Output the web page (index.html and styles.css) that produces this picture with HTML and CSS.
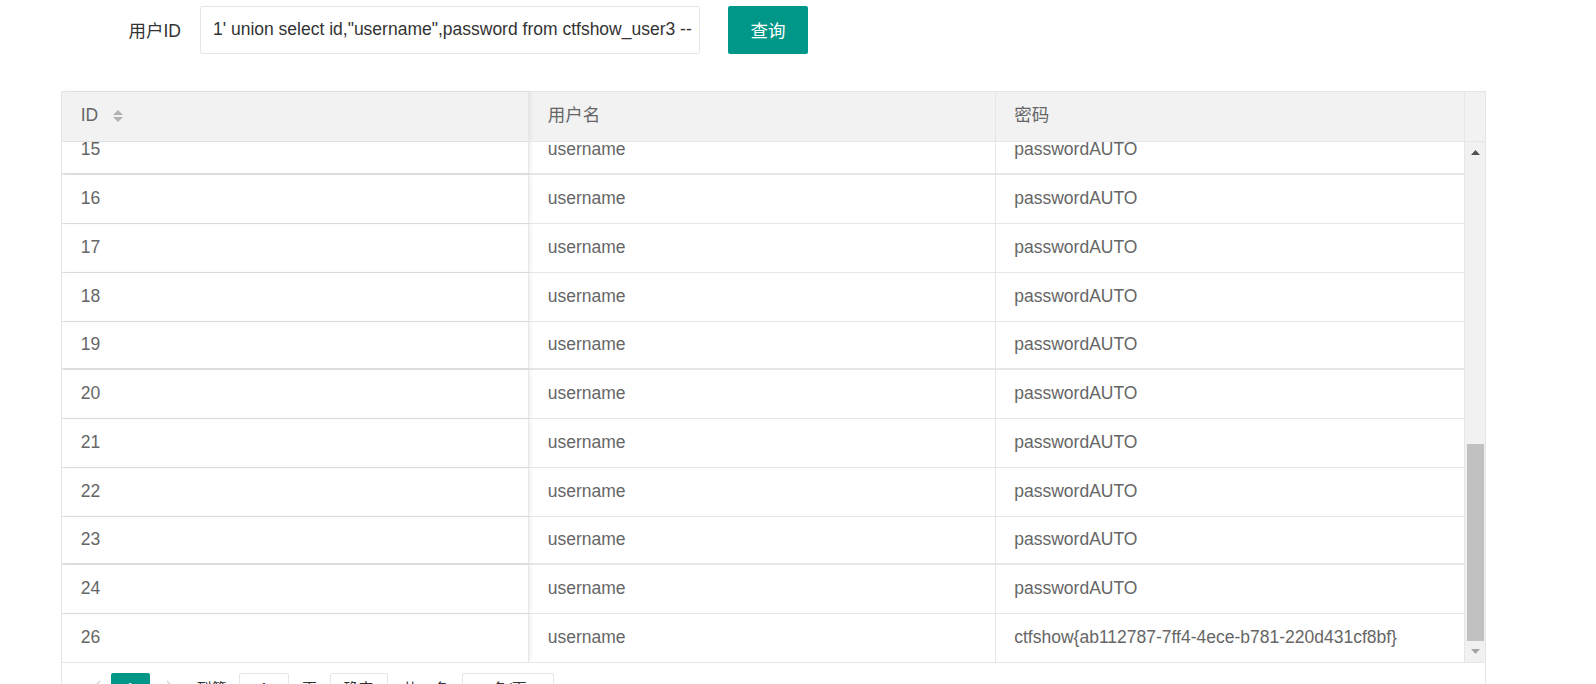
FILE: index.html
```html
<!DOCTYPE html>
<html lang="zh-CN">
<head>
  <meta charset="UTF-8" />
  <title>ctfshow 查询</title>
  <link rel="stylesheet" href="styles.css">
</head>
<body>
  <div class="page">
    <form class="query-form" onsubmit="return false;">
      <label class="form-label" for="uid">用户ID</label>
      <input class="form-input" id="uid" type="text" value='1&#39; union select id,"username",password from ctfshow_user3 -- c' />
      <button class="query-button" type="submit">查询</button>
    </form>

    <div class="table-box">
      <div class="table-head">
        <div class="cell col-id">ID
          <svg class="sort-icon" width="10" height="14" viewBox="0 0 10 14">
            <polygon points="0,6 5,1 10,6" />
            <polygon points="0,8 5,13 10,8" />
          </svg>
        </div>
        <div class="cell col-name">用户名</div>
        <div class="cell col-pass">密码</div>
        <div class="gutter"></div>
      </div>

      <div class="table-body">
        <div class="rows">
          <div class="rows-inner">
            <div class="row thick"><div class="cell col-id">15</div><div class="cell col-name">username</div><div class="cell col-pass">passwordAUTO</div></div>
            <div class="row"><div class="cell col-id">16</div><div class="cell col-name">username</div><div class="cell col-pass">passwordAUTO</div></div>
            <div class="row"><div class="cell col-id">17</div><div class="cell col-name">username</div><div class="cell col-pass">passwordAUTO</div></div>
            <div class="row"><div class="cell col-id">18</div><div class="cell col-name">username</div><div class="cell col-pass">passwordAUTO</div></div>
            <div class="row thick"><div class="cell col-id">19</div><div class="cell col-name">username</div><div class="cell col-pass">passwordAUTO</div></div>
            <div class="row"><div class="cell col-id">20</div><div class="cell col-name">username</div><div class="cell col-pass">passwordAUTO</div></div>
            <div class="row"><div class="cell col-id">21</div><div class="cell col-name">username</div><div class="cell col-pass">passwordAUTO</div></div>
            <div class="row"><div class="cell col-id">22</div><div class="cell col-name">username</div><div class="cell col-pass">passwordAUTO</div></div>
            <div class="row thick"><div class="cell col-id">23</div><div class="cell col-name">username</div><div class="cell col-pass">passwordAUTO</div></div>
            <div class="row"><div class="cell col-id">24</div><div class="cell col-name">username</div><div class="cell col-pass">passwordAUTO</div></div>
            <div class="row"><div class="cell col-id">26</div><div class="cell col-name">username</div><div class="cell col-pass">ctfshow{ab112787-7ff4-4ece-b781-220d431cf8bf}</div></div>
          </div>
        </div>
        <div class="scrollbar">
          <div class="scroll-btn">
            <svg width="9" height="5" viewBox="0 0 9 5"><polygon points="0,5 4.5,0 9,5" fill="#505050" /></svg>
          </div>
          <div class="scroll-track">
            <div class="scroll-thumb" style="height: 197px;"></div>
          </div>
          <div class="scroll-btn">
            <svg width="9" height="5" viewBox="0 0 9 5"><polygon points="0,0 4.5,5 9,0" fill="#a3a3a3" /></svg>
          </div>
        </div>
      </div>

      <div class="table-page">
        <span class="page-arrow prev">
          <svg width="9" height="16" viewBox="0 0 9 16"><polyline points="8,1 1,8 8,15" fill="none" stroke="#d2d2d2" stroke-width="1.4" /></svg>
        </span>
        <span class="page-current">1</span>
        <span class="page-arrow next">
          <svg width="9" height="16" viewBox="0 0 9 16"><polyline points="1,1 8,8 1,15" fill="none" stroke="#d2d2d2" stroke-width="1.4" /></svg>
        </span>
        <span class="page-text">到第</span>
        <input class="page-input" type="text" value="1" />
        <span class="page-text">页</span>
        <button class="page-btn" type="button">确定</button>
        <span class="page-text">共 1 条</span>
        <span class="page-select">10 条/页
          <svg width="10" height="6" viewBox="0 0 10 6"><polygon points="0,0 5,5 10,0" fill="#c2c2c2" /></svg>
        </span>
      </div>
    </div>
  </div>
</body>
</html>
```

FILE: styles.css
```css
html, body {
  margin: 0;
  padding: 0;
  overflow: hidden;
}

body {
  font-family: "Liberation Sans", Arial, "Noto Sans CJK SC", sans-serif;
  font-size: 17.5px;
  color: #666;
  background: #fff;
}

.page {
  padding-left: 61px;
  width: 1425px;
}

.query-form {
  display: flex;
  align-items: center;
  height: 47.5px;
  margin: 0;
  padding-top: 6px;
}

.form-label {
  width: 120px;
  padding-right: 18.5px;
  text-align: right;
  color: #333;
}

.form-input {
  box-sizing: border-box;
  width: 500px;
  height: 47.5px;
  border: 1px solid #e6e6e6;
  border-radius: 2px;
  padding: 0 2px 0 12.5px;
  font-family: inherit;
  font-size: 17.5px;
  color: #333;
  outline: none;
}

.query-button {
  margin-left: 28.5px;
  width: 80px;
  height: 47.5px;
  border: none;
  border-radius: 2px;
  background: #009688;
  color: #fff;
  font-family: inherit;
  font-size: 17.5px;
  cursor: pointer;
}

.table-box {
  margin-top: 37px;
  border: 1px solid #e6e6e6;
  border-bottom: none;
}

.table-head {
  display: flex;
  box-sizing: border-box;
  height: 50px;
  background: #f2f2f2;
  border-bottom: 1px solid #e6e6e6;
}

.cell {
  box-sizing: border-box;
  display: flex;
  align-items: center;
  padding-left: 18.75px;
  line-height: 1;
}

.col-id {
  width: 467px;
  border-right: 1px solid #e6e6e6;
  box-shadow: 2px 0 4px rgba(0, 0, 0, 0.06);
}

.col-name {
  width: 466.5px;
  border-right: 1px solid #e6e6e6;
}

.col-pass {
  flex: 1;
}

.sort-icon {
  margin-left: 15px;
  fill: #b2b2b2;
}

.gutter {
  width: 21px;
  box-sizing: border-box;
  border-left: 1px solid #e6e6e6;
}

.table-body {
  display: flex;
  height: 520px;
}

.rows {
  flex: 1;
  overflow: hidden;
}

.rows-inner {
  margin-top: -15px;
}

.row {
  display: flex;
  box-sizing: border-box;
  height: 48.75px;
  border-bottom: 1px solid #e6e6e6;
}

.row.thick {
  border-bottom-width: 2px;
}

.scrollbar {
  width: 21px;
  box-sizing: border-box;
  border-left: 1px solid #e6e6e6;
  background: #f1f1f1;
  display: flex;
  flex-direction: column;
}

.scroll-btn {
  height: 21px;
  display: flex;
  align-items: center;
  justify-content: center;
}

.scroll-track {
  flex: 1;
  display: flex;
  flex-direction: column;
  justify-content: flex-end;
  padding: 0 1px 0 2px;
}

.scroll-thumb {
  background: #c1c1c1;
}

.table-page {
  display: flex;
  align-items: center;
  height: 30px;
  padding: 10px 19px 0;
  border-top: 1px solid #e6e6e6;
  font-size: 15px;
  color: #333;
}

.page-arrow {
  height: 30px;
  display: flex;
  align-items: center;
  justify-content: center;
}

.page-arrow.prev {
  width: 30px;
}

.page-arrow.next {
  width: 42px;
  margin-right: 5px;
}

.page-current {
  width: 38.5px;
  height: 30px;
  display: flex;
  align-items: center;
  justify-content: center;
  background: #009688;
  color: #fff;
  border-radius: 2px;
}

.page-text {
  margin-right: 12.5px;
}

.page-input,
.page-btn,
.page-select {
  box-sizing: border-box;
  height: 30px;
  border: 1px solid #e6e6e6;
  border-radius: 2px;
  background: #fff;
  font-family: inherit;
  font-size: 15px;
  color: #333;
  margin-right: 13px;
}

.page-input {
  width: 50px;
  text-align: center;
}

.page-btn {
  width: 58px;
  padding: 0;
  margin-right: 15px;
}

.page-select {
  width: 92px;
  display: flex;
  align-items: center;
  justify-content: space-between;
  padding: 0 9px;
}
```
